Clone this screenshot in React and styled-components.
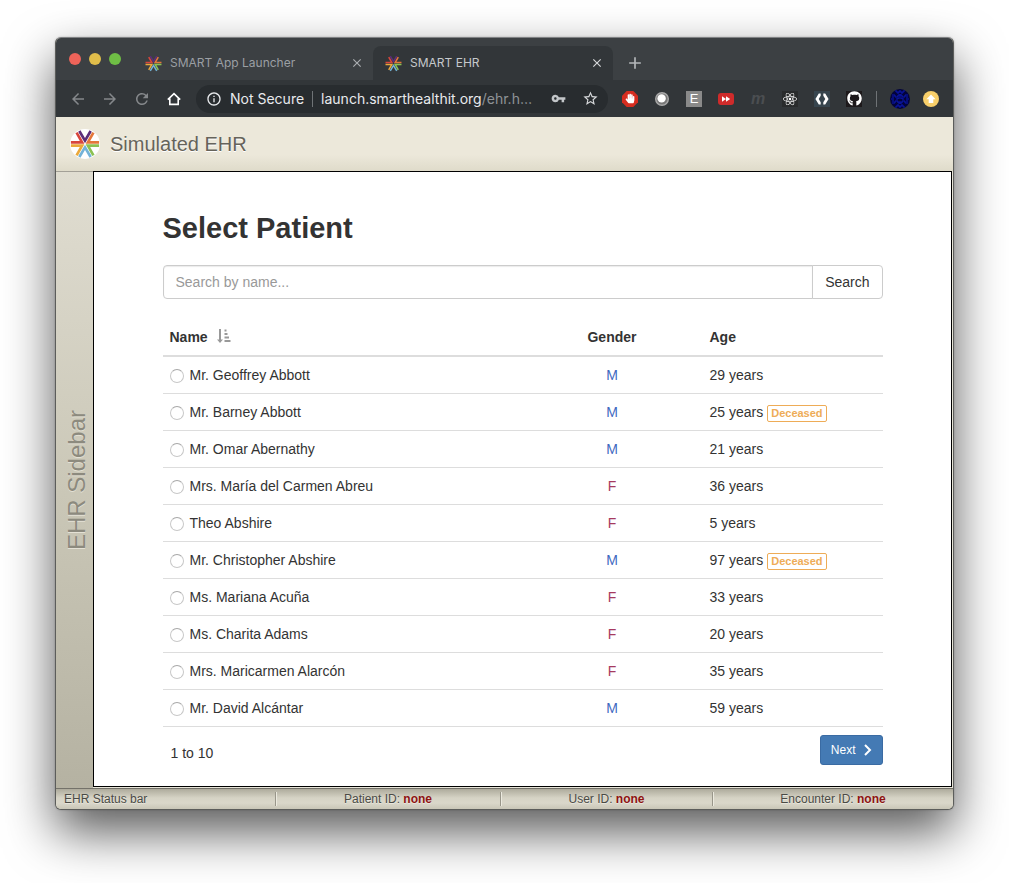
import React from "react";
import styled, { createGlobalStyle } from "styled-components";
import {
  MdArrowBack,
  MdArrowForward,
  MdRefresh,
  MdInfoOutline,
  MdVpnKey,
  MdStarBorder,
  MdClose,
  MdAdd,
} from "react-icons/md";
import { FaHandPaper, FaGithub, FaReact } from "react-icons/fa";

const GlobalStyle = createGlobalStyle`
  *, *::before, *::after { box-sizing: border-box; }
  body {
    margin: 0;
    background: #fff;
    color: #333;
    font: 14px/20px "Liberation Sans", Arial, sans-serif;
  }
  button, input { font: inherit; color: inherit; }
  svg { display: block; flex: none; }
`;

const Page = styled.div`
  min-height: 100vh;
  padding: 37px 55px 64px;
`;

const Window = styled.div`
  border: 1px solid #5c5d5b;
  border-top-color: #808284;
  border-radius: 6px;
  overflow: hidden;
  background: #e8e5d8;
  box-shadow: 0 22px 50px rgba(0, 0, 0, 0.66), 0 0 2px rgba(0, 0, 0, 0.25);
`;

/* Browser chrome */

const TabStrip = styled.div`
  display: flex;
  align-items: flex-end;
  height: 42px;
  padding-left: 13px;
  background: #3c4043;
`;

const Lights = styled.div`
  display: flex;
  align-self: center;
  gap: 8px;
  width: 64px;
`;

const Light = styled.button`
  width: 12px;
  height: 12px;
  padding: 0;
  border: 0;
  border-radius: 50%;
  background: ${(p) => p.$color};
`;

const Tab = styled.div`
  display: flex;
  align-items: center;
  flex: 0 1 240px;
  height: 34px;
  padding: 0 9px 0 12px;
  gap: 8px;
  border-radius: 8px 8px 0 0;
  background: ${(p) => (p.$active ? "#323639" : "transparent")};
  color: ${(p) => (p.$active ? "#c6c9cc" : "#9b9fa3")};
  font: 12px/16px Inter, sans-serif;
`;

const TabTitle = styled.span`
  flex: 1;
  white-space: nowrap;
`;

const IconButton = styled.button`
  display: flex;
  align-items: center;
  justify-content: center;
  flex: none;
  width: ${(p) => p.$size || 16}px;
  height: ${(p) => p.$size || 16}px;
  padding: 0;
  border: 0;
  border-radius: ${(p) => (p.$round ? "50%" : "0")};
  background: ${(p) => p.$bg || "transparent"};
  color: ${(p) => p.$color || "#fff"};
`;

const NewTab = styled(IconButton)`
  align-self: flex-end;
  height: 34px;
  margin-left: 12px;
`;

const Toolbar = styled.div`
  display: flex;
  align-items: center;
  gap: 14px;
  height: 37px;
  padding: 0 14px;
  background: #323639;
`;

const IconGroup = styled.div`
  display: flex;
  align-items: center;
  gap: ${(p) => p.$gap || 16}px;
`;

const Omnibox = styled.div`
  display: flex;
  align-items: center;
  flex: 1;
  min-width: 0;
  height: 28px;
  padding: 0 10px;
  gap: 8px;
  border-radius: 14px;
  background: #282c2f;
  color: #e8eaed;
  font: 14px/20px Inter, sans-serif;
`;

const Url = styled.span`
  flex: 1;
  white-space: nowrap;
  span { color: #8f9397; }
`;

const Divider = styled.span`
  flex: none;
  width: 1px;
  height: 16px;
  background: #6f7376;
`;

const Letter = styled.span`
  color: ${(p) => p.$color};
  font: ${(p) => p.$font};
`;

/* EHR application */

const Header = styled.header`
  display: flex;
  align-items: center;
  gap: 10px;
  height: 54px;
  padding: 0 14px;
  background: linear-gradient(#ece8da 70%, #dfdbca);
  h1 {
    margin: 0;
    color: #66635a;
    font-size: 20px;
    font-weight: 400;
    line-height: 24px;
    text-shadow: 0 1px 0 #fff;
  }
`;

const Body = styled.div`
  display: flex;
  padding: 0 1px 1px 0;
`;

const Sidebar = styled.aside`
  display: flex;
  align-items: center;
  justify-content: center;
  flex: none;
  width: 37px;
  margin-bottom: -1px;
  padding-left: 4px;
  border-top: 1px solid #a3a097;
  background: linear-gradient(#e0ddd1, #cbc8b8 50%, #b5b2a2);
  color: #8c8a7e;
  font-size: 24px;
  line-height: 28px;
  text-shadow: -1px 0 0 #e4e1d5;
  span {
    writing-mode: vertical-rl;
    transform: rotate(180deg);
  }
`;

const Main = styled.main`
  flex: 1;
  min-width: 0;
  padding: 40px 20px 21px;
  border: 1px solid #000;
  background: #fff;
`;

const Content = styled.div`
  max-width: 720px;
  margin: 0 auto;
`;

const Title = styled.h2`
  margin: 0 0 20px;
  font-size: 29px;
  font-weight: 700;
  line-height: 33px;
`;

const SearchForm = styled.form`
  display: flex;
  margin-bottom: 20px;
`;

const SearchInput = styled.input`
  flex: 1;
  min-width: 0;
  height: 34px;
  padding: 6px 12px;
  border: 1px solid #ccc;
  border-radius: 4px 0 0 4px;
  background: #fff;
  box-shadow: inset 0 1px 1px rgba(0, 0, 0, 0.08);
  &::placeholder { color: #999; opacity: 1; }
`;

const SearchButton = styled.button`
  height: 34px;
  margin-left: -1px;
  padding: 6px 12px;
  border: 1px solid #ccc;
  border-radius: 0 4px 4px 0;
  background: #fff;
`;

const PatientTable = styled.table`
  width: 100%;
  border-spacing: 0;
  table-layout: fixed;
`;

const HeadCell = styled.th`
  width: ${(p) => p.$width};
  padding: 8px 8px 8px 7px;
  border-bottom: 2px solid #ddd;
  text-align: ${(p) => p.$align || "left"};
  svg { display: inline-block; margin-left: 9px; vertical-align: -1px; }
`;

const Cell = styled.td`
  padding: 8px 8px 8px 7px;
  border-bottom: 1px solid #ddd;
  text-align: ${(p) => p.$align || "left"};
  color: ${(p) => p.$color || "inherit"};
`;

const PatientLabel = styled.label`
  display: flex;
  align-items: center;
  gap: 6px;
`;

const Radio = styled.input`
  appearance: none;
  width: 14px;
  height: 14px;
  margin: 2px 0 0;
  border: 1px solid #c8c8c8;
  border-top-color: #a8a8a8;
  border-radius: 50%;
  background: #fff;
  &:checked { border: 4px solid #447ab4; }
`;

const Badge = styled.span`
  display: inline-block;
  margin: 3px 0 0 4px;
  padding: 0 3px;
  border: 1px solid #eeac57;
  border-radius: 2px;
  color: #eeac57;
  font-size: 11px;
  font-weight: 700;
  line-height: 15px;
  vertical-align: top;
`;

const Pager = styled.div`
  display: flex;
  align-items: flex-start;
  justify-content: space-between;
  padding-top: 8px;
`;

const Range = styled.span`
  padding: 8px 8px 0;
`;

const NextButton = styled.button`
  display: flex;
  align-items: center;
  gap: 8px;
  height: 30px;
  padding: 0 10px;
  border: 1px solid #3a6ba3;
  border-radius: 3px;
  background: #447ab4;
  color: #fff;
  font-size: 12px;
  line-height: 18px;
`;

const StatusBar = styled.footer`
  display: grid;
  grid-template-columns: 219fr 225fr 212fr 241fr;
  align-items: center;
  height: 21px;
  border-top: 1px solid #74726a;
  background: linear-gradient(#aeab9c, #d6d3c5 45%, #dad7ca 70%, #c9c6b7);
  color: #4a4a45;
  font-size: 12px;
  text-shadow: 0 1px 0 #e8e6dc;
`;

const StatusCell = styled.div`
  padding: 0 8px;
  border-left: ${(p) => (p.$first ? "0" : "1px solid #99968a")};
  box-shadow: ${(p) => (p.$first ? "none" : "inset 1px 0 0 #eceadf")};
  line-height: 14px;
  text-align: ${(p) => (p.$first ? "left" : "center")};
  strong { color: #8e1212; }
`;

const RAYS = ["#5c2d79", "#e4773a", "#8cc152", "#74b3d8", "#eba93b", "#d8463c"];

function SmartMark({ size, disc }) {
  return (
    <svg width={size} height={size} viewBox="-45 -45 90 90" aria-hidden="true">
      {disc && <circle r="45" fill="#fff" />}
      {RAYS.map((color, i) => (
        <path
          key={color}
          d="M-17 -39L0 -10L17 -39"
          transform={`rotate(${i * 60})`}
          fill="none"
          stroke={color}
          strokeWidth="8"
        />
      ))}
    </svg>
  );
}

const HomeIcon = () => (
  <svg width="16" height="16" viewBox="0 0 16 16" fill="none" stroke="currentColor" strokeWidth="1.6">
    <path d="M1.8 8.6L8 2.6L14.2 8.6M3.8 7.4V13.4H12.2V7.4" />
  </svg>
);

const BallIcon = () => (
  <svg width="16" height="16" viewBox="0 0 16 16">
    <circle cx="8" cy="8" r="6.3" fill="#777" stroke="#a9a9a9" strokeWidth="1.4" />
    <circle cx="7.6" cy="7.4" r="4.2" fill="#fff" />
  </svg>
);

const OctagonIcon = () => (
  <svg width="16" height="16" viewBox="0 0 16 16">
    <path d="M4.7 0H11.3L16 4.7V11.3L11.3 16H4.7L0 11.3V4.7Z" fill="#d62d20" />
    <FaHandPaper x="3" y="2.5" size={10} color="#fff" />
  </svg>
);

const ForwardIcon = () => (
  <svg width="16" height="16" viewBox="0 0 16 16">
    <rect y="2" width="16" height="12" rx="3" fill="#cf2b2b" />
    <path d="M4 5.3L8 8L4 10.7ZM8 5.3L12.2 8L8 10.7Z" fill="#fff" />
  </svg>
);

const HexIcon = () => (
  <svg width="16" height="16" viewBox="0 0 16 16" fill="#fff">
    <path d="M6.7 2.6H4.8L1.4 8L4.8 13.4H6.7V11.2L4.7 8L6.7 4.8ZM9.3 2.6H11.2L14.6 8L11.2 13.4H9.3V11.2L11.3 8L9.3 4.8Z" />
  </svg>
);

const AvatarIcon = () => (
  <svg width="20" height="20" viewBox="0 0 20 20" fill="none" stroke="#0b18b4" strokeWidth="1">
    <path d="M5 2h2v2h2V2h2v2h2V2h2M2 6h3v2h3V6h4v2h3V6h3M1 10h3M6 10h2v-1h4v1h2M16 10h3M2 14h3v-2h3v2h4v-2h3v2h3M5 18h2v-2h2v2h2v-2h2v2h2M10 5v3M10 12v3M3 7v2M17 7v2M3 11v2M17 11v2" />
  </svg>
);

const UpdateIcon = () => (
  <svg width="16" height="16" viewBox="0 0 16 16">
    <path d="M8 3.6L12.6 8.2H10.3V12H5.7V8.2H3.4Z" fill="#fff" />
  </svg>
);

const SortIcon = () => (
  <svg width="14" height="14" viewBox="0 0 14 14" fill="#999" aria-hidden="true">
    <path d="M2 0H4V10.5H6L3 14L0 10.5H2ZM7.5 0.5H9.5V2.5H7.5ZM7.5 4H10.5V6H7.5ZM7.5 7.5H12V9.5H7.5ZM7.5 11H13.5V13H7.5Z" />
  </svg>
);

const ChevronIcon = () => (
  <svg width="8" height="12" viewBox="0 0 8 12" fill="none" stroke="#fff" strokeWidth="2" aria-hidden="true">
    <path d="M1 1L6 6L1 11" />
  </svg>
);

const PATIENTS = [
  ["Mr. Geoffrey Abbott", "M", 29],
  ["Mr. Barney Abbott", "M", 25, true],
  ["Mr. Omar Abernathy", "M", 21],
  ["Mrs. María del Carmen Abreu", "F", 36],
  ["Theo Abshire", "F", 5],
  ["Mr. Christopher Abshire", "M", 97, true],
  ["Ms. Mariana Acuña", "F", 33],
  ["Ms. Charita Adams", "F", 20],
  ["Mrs. Maricarmen Alarcón", "F", 35],
  ["Mr. David Alcántar", "M", 59],
];

const STATUS = ["Patient ID", "User ID", "Encounter ID"];

function BrowserTab({ title, active }) {
  return (
    <Tab $active={active}>
      <SmartMark size={17} />
      <TabTitle>{title}</TabTitle>
      <IconButton aria-label={`Close ${title}`} $size={14} $color={active ? "#d5d7d9" : "#aaadb0"}>
        <MdClose size={14} />
      </IconButton>
    </Tab>
  );
}

function PatientRow({ name, gender, age, deceased }) {
  return (
    <tr>
      <Cell>
        <PatientLabel>
          <Radio type="radio" name="patient" value={name} />
          {name}
        </PatientLabel>
      </Cell>
      <Cell $align="center" $color={gender === "M" ? "#3f69bf" : "#a63a60"}>
        {gender}
      </Cell>
      <Cell>
        {age} years{deceased && <Badge>Deceased</Badge>}
      </Cell>
    </tr>
  );
}

export default function App() {
  return (
    <Page>
      <GlobalStyle />
      <Window>
        <TabStrip>
          <Lights>
            <Light $color="#ee6359" aria-label="Close window" />
            <Light $color="#e0bd4a" aria-label="Minimize window" />
            <Light $color="#6fbe45" aria-label="Zoom window" />
          </Lights>
          <BrowserTab title="SMART App Launcher" />
          <BrowserTab title="SMART EHR" active />
          <NewTab aria-label="New tab" $size={20} $color="#b4b7ba">
            <MdAdd size={20} />
          </NewTab>
        </TabStrip>
        <Toolbar>
          <IconGroup>
            <IconButton aria-label="Back" $color="#85888b"><MdArrowBack size={18} /></IconButton>
            <IconButton aria-label="Forward" $color="#85888b"><MdArrowForward size={18} /></IconButton>
            <IconButton aria-label="Reload" $color="#85888b"><MdRefresh size={18} /></IconButton>
            <IconButton aria-label="Home"><HomeIcon /></IconButton>
          </IconGroup>
          <Omnibox>
            <MdInfoOutline size={16} />
            <span>Not Secure</span>
            <Divider />
            <Url>launch.smarthealthit.org<span>/ehr.h…</span></Url>
            <IconGroup>
              <IconButton aria-label="Saved passwords" $color="#c3c6c9"><MdVpnKey size={15} /></IconButton>
              <IconButton aria-label="Bookmark" $color="#d5d7d9"><MdStarBorder size={17} /></IconButton>
            </IconGroup>
          </Omnibox>
          <IconGroup>
            <IconButton aria-label="Ad blocker"><OctagonIcon /></IconButton>
            <IconButton aria-label="Ball extension"><BallIcon /></IconButton>
            <IconButton aria-label="E extension" $bg="#8a8a8a">
              <Letter $color="#fff" $font='13px/16px "Liberation Sans", sans-serif'>E</Letter>
            </IconButton>
            <IconButton aria-label="Video speed"><ForwardIcon /></IconButton>
            <IconButton aria-label="m extension">
              <Letter $color="#4b4e51" $font='italic 700 16px/16px "Liberation Sans", sans-serif'>m</Letter>
            </IconButton>
            <IconButton aria-label="React tools" $bg="#292b2c"><FaReact size={14} /></IconButton>
            <IconButton aria-label="Hexagon extension" $bg="#37454e"><HexIcon /></IconButton>
            <IconButton aria-label="GitHub extension" $bg="#1d191b"><FaGithub size={15} /></IconButton>
          </IconGroup>
          <IconGroup $gap={13}>
            <Divider />
            <IconButton aria-label="Profile" $size={20} $round $bg="#02033c"><AvatarIcon /></IconButton>
            <IconButton aria-label="Update browser" $round $bg="#f8cf6a"><UpdateIcon /></IconButton>
          </IconGroup>
        </Toolbar>

        <Header>
          <SmartMark size={30} disc />
          <h1>Simulated EHR</h1>
        </Header>
        <Body>
          <Sidebar><span>EHR Sidebar</span></Sidebar>
          <Main>
            <Content>
              <Title>Select Patient</Title>
              <SearchForm onSubmit={(e) => e.preventDefault()}>
                <SearchInput type="text" placeholder="Search by name..." aria-label="Search by name" />
                <SearchButton type="submit">Search</SearchButton>
              </SearchForm>
              <PatientTable>
                <thead>
                  <tr>
                    <HeadCell scope="col">Name<SortIcon /></HeadCell>
                    <HeadCell scope="col" $width="25%" $align="center">Gender</HeadCell>
                    <HeadCell scope="col" $width="25%">Age</HeadCell>
                  </tr>
                </thead>
                <tbody>
                  {PATIENTS.map(([name, gender, age, deceased]) => (
                    <PatientRow key={name} name={name} gender={gender} age={age} deceased={deceased} />
                  ))}
                </tbody>
              </PatientTable>
              <Pager>
                <Range>1 to 10</Range>
                <NextButton type="button">Next<ChevronIcon /></NextButton>
              </Pager>
            </Content>
          </Main>
        </Body>
        <StatusBar>
          <StatusCell $first>EHR Status bar</StatusCell>
          {STATUS.map((label) => (
            <StatusCell key={label}>{label}: <strong>none</strong></StatusCell>
          ))}
        </StatusBar>
      </Window>
    </Page>
  );
}
